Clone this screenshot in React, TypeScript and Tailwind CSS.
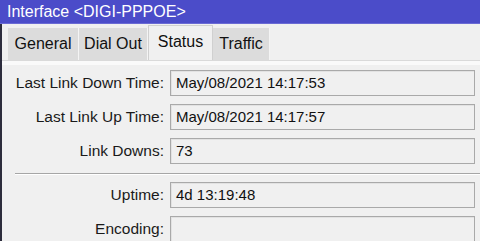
const FONT = { fontFamily: '"Liberation Sans", Arial, sans-serif' };

const rows1 = [
  { label: 'Last Link Down Time:', value: 'May/08/2021 14:17:53' },
  { label: 'Last Link Up Time:', value: 'May/08/2021 14:17:57' },
  { label: 'Link Downs:', value: '73' },
];

const rows2 = [
  { label: 'Uptime:', value: '4d 13:19:48' },
  { label: 'Encoding:', value: '' },
];

function Row({ label, value }: { label: string; value: string }) {
  return (
    <div className="flex items-center h-[26px]">
      <div className="w-[164px] pr-[2px] text-right text-[15.5px] text-[#1a1a1a] whitespace-nowrap">{label}</div>
      <div className="ml-[4px] w-[305px] h-[26px] flex items-center px-[5px] bg-[#f0f0f0] border border-[#a9a9a9] shadow-[inset_1px_1px_0_#e2e2e2] text-[15px] text-[#111]">
        {value}
      </div>
    </div>
  );
}

export default function App() {
  const tabs = ['General', 'Dial Out', 'Status', 'Traffic'];
  return (
    <div className="w-[480px] h-[241px] overflow-hidden bg-[#f0f0f0] flex flex-col" style={FONT}>
      <div className="h-[24px] shrink-0 bg-[#4b4cc9] border-b border-[#6a6ad4] flex items-center pl-[7px] text-white text-[16px]">
        Interface &lt;DIGI-PPPOE&gt;
      </div>
      <div className="flex-1 flex flex-col border-l-2 border-[#2c2c3c]">
        <div className="h-[37px] shrink-0 flex items-end pl-[6px] border-b border-[#dadada]">
          {tabs.map(t =>
            t === 'Status' ? (
              <div key={t} className="w-[65px] h-[35px] flex items-center justify-center bg-[#f0f0f0] border-x border-t border-[#d0d0d0] text-[16px] text-[#111] pb-[3px]">
                {t}
              </div>
            ) : (
              <div key={t} className={`h-[32px] flex items-center justify-center bg-[#dcdcdc] border-r border-[#f4f4f4] text-[16px] text-[#111] ${t === 'General' ? 'w-[71px]' : t === 'Dial Out' ? 'w-[69px]' : 'w-[57px]'}`}>
                {t}
              </div>
            )
          )}
        </div>
        <div className="h-[4px] bg-[#fafafa]" />
        <div className="flex flex-col pt-[5px] gap-[8px]">
          {rows1.map(r => <Row key={r.label} {...r} />)}
        </div>
        <div className="ml-[13px] mt-[9px] h-[2px] border-t border-[#a6a6a6] border-b border-b-white" />
        <div className="flex flex-col pt-[7px] gap-[8px]">
          {rows2.map(r => <Row key={r.label} {...r} />)}
        </div>
      </div>
    </div>
  );
}
